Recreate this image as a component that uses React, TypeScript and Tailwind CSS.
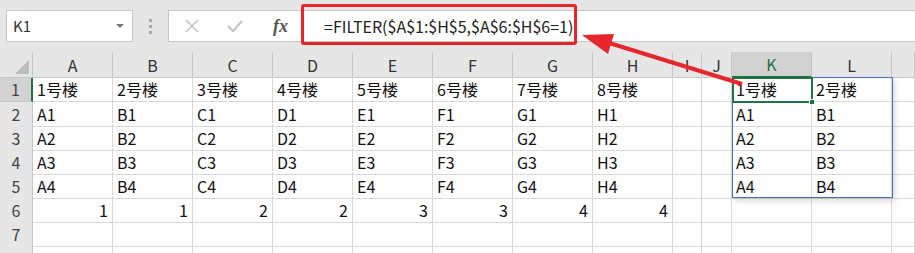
import React from 'react';

const cols = ['A', 'B', 'C', 'D', 'E', 'F', 'G', 'H', 'I', 'J', 'K', 'L', ''];
const grid = 'grid grid-cols-[33px_repeat(8,80px)_29px_30px_80px_80px_1fr]';

const rows: { label: string; cells: string[]; numeric?: boolean; h: string }[] = [
  { label: '1', cells: ['1号楼', '2号楼', '3号楼', '4号楼', '5号楼', '6号楼', '7号楼', '8号楼', '', '', '1号楼', '2号楼', ''], h: 'h-[25px]' },
  ...[1, 2, 3, 4].map(n => ({
    label: String(n + 1),
    cells: ['A', 'B', 'C', 'D', 'E', 'F', 'G', 'H'].map(c => c + n).concat(['', '', 'A' + n, 'B' + n, '']),
    h: 'h-[24px]',
  })),
  { label: '6', cells: ['1', '1', '2', '2', '3', '3', '4', '4', '', '', '', '', ''], numeric: true, h: 'h-[24px]' },
  { label: '7', cells: Array(13).fill(''), h: 'h-[24px]' },
  { label: '8', cells: Array(13).fill(''), h: 'h-[24px]' },
];

const Toolbar = () => (
  <div className="flex items-start h-[52px] bg-[#e6e6e6] pt-[10px] pl-[6px]">
    <div className="flex items-center justify-between w-[127px] h-[32px] bg-white border border-[#c8c8c8] pl-[6px] pr-[8px]">
      <span className="text-[15px] text-[#333]">K1</span>
      <span className="w-0 h-0 border-l-[4px] border-r-[4px] border-t-[4px] border-l-transparent border-r-transparent border-t-[#777]" />
    </div>
    <div className="flex flex-col gap-[3px] ml-[16px] mt-[9px]">
      <span className="w-[3px] h-[3px] bg-[#a8a8a8]" />
      <span className="w-[3px] h-[3px] bg-[#a8a8a8]" />
      <span className="w-[3px] h-[3px] bg-[#a8a8a8]" />
    </div>
    <div className="relative flex items-center flex-1 h-[32px] ml-[16px] bg-white border border-[#c8c8c8] border-r-0">
      <svg width="14" height="14" viewBox="0 0 14 14" className="ml-[16px]">
        <path d="M1 1 L13 13 M13 1 L1 13" stroke="#c4c4c4" strokeWidth="1.6" fill="none" />
      </svg>
      <svg width="16" height="12" viewBox="0 0 16 12" className="ml-[28px]">
        <path d="M1 6 L6 11 L15 1" stroke="#c4c4c4" strokeWidth="2.2" fill="none" />
      </svg>
      <span className="ml-[30px] text-[18px] italic text-[#555] font-['Liberation_Serif',serif] font-bold">fx</span>
      <div className="absolute left-[132px] top-[-7px] w-[276px] h-[41px] border-[3px] border-[#e5262b] rounded-[3px]" />
      <span className="ml-[36px] text-[16px] text-[#222]">=FILTER($A$1:$H$5,$A$6:$H$6=1)</span>
    </div>
  </div>
);

const HeaderRow = () => (
  <div className={`${grid} h-[25px] bg-[#e6e6e6]`}>
    <div className="relative border-r border-b border-[#c6c6c6]">
      <span className="absolute right-[3px] bottom-[3px] w-0 h-0 border-l-[14px] border-t-[14px] border-l-transparent border-t-transparent border-b-0 border-r-0 border-[#bcbcbc] [border-bottom:14px_solid_#bcbcbc]" />
    </div>
    {cols.map((c, i) => (
      <div
        key={i}
        className={`flex items-center justify-center text-[16px] border-r border-[#c6c6c6] ${
          c === 'K' ? 'bg-[#d2d2d2] text-[#217346] border-b-2 border-b-[#217346]' : 'text-[#333] border-b border-b-[#c6c6c6]'
        }`}
      >
        {c}
      </div>
    ))}
  </div>
);

export default function App() {
  return (
    <div className="relative w-[915px] h-[253px] overflow-hidden bg-white font-['Noto_Sans_CJK_SC','Noto_Sans',sans-serif]">
      <Toolbar />
      <HeaderRow />
      {rows.map(r => (
        <div key={r.label} className={`${grid} ${r.h}`}>
          <div
            className={`flex items-center justify-center text-[16px] text-[#444] border-b border-[#c6c6c6] ${
              r.label === '1' ? 'bg-[#d2d2d2] border-r-2 border-r-[#217346]' : 'bg-[#e6e6e6] border-r border-r-[#c6c6c6]'
            }`}
          >
            {r.label}
          </div>
          {r.cells.map((v, i) => (
            <div
              key={i}
              className={`flex items-center px-[4px] text-[16px] leading-none text-[#111] border-r border-b border-[#d9d9d9] ${
                r.numeric ? 'justify-end' : 'justify-start'
              }`}
            >
              {v}
            </div>
          ))}
        </div>
      ))}

      {/* spill range */}
      <div className="absolute left-[732px] top-[77px] w-[161px] h-[121px] border border-[#4a72b8] shadow-[2px_3px_6px_rgba(0,0,0,0.15)] pointer-events-none" />
      {/* active cell */}
      <div className="absolute left-[732px] top-[77px] w-[81px] h-[26px] border-2 border-[#217346] pointer-events-none" />
      <div className="absolute left-[809px] top-[99px] w-[6px] h-[6px] bg-[#217346] border border-white" />

      {/* annotation arrow */}
      <svg className="absolute left-0 top-0 pointer-events-none" width="915" height="253">
        <line x1="742" y1="84" x2="606" y2="42" stroke="#e5262b" strokeWidth="4" />
        <polygon points="582,35 614,34 608,54" fill="#e5262b" />
      </svg>
    </div>
  );
}
